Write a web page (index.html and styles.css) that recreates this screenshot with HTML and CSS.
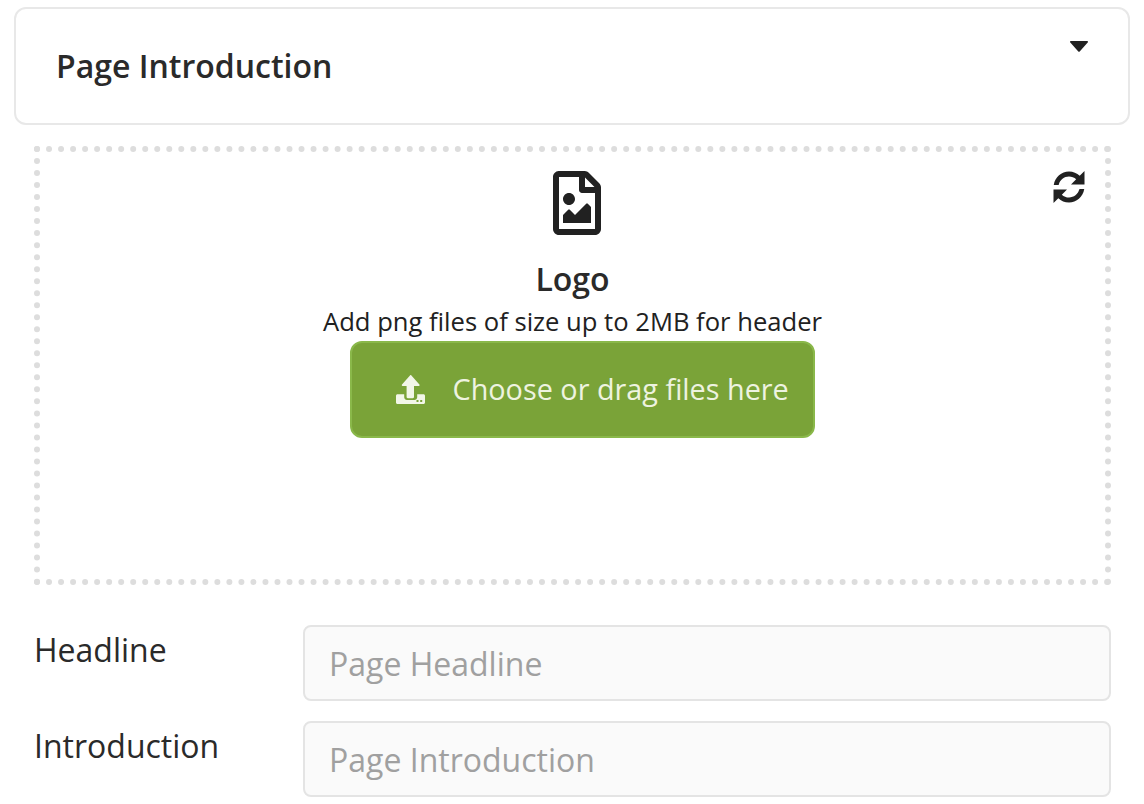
FILE: index.html
```html
<!DOCTYPE html>
<html lang="en">
<head>
<meta charset="utf-8">
<title>Page Introduction</title>
<link rel="stylesheet" href="styles.css">
</head>
<body>
<main class="page">
  <section class="panel">
    <h2 class="panel-title">Page Introduction</h2>
    <svg class="caret" viewBox="0 0 18 11" aria-hidden="true"><path d="M1 0h16c.9 0 1.3 1 .7 1.6L9.7 10.4c-.4.4-1 .4-1.4 0L.3 1.6C-.3 1 .1 0 1 0z"/></svg>
  </section>
  <section class="dropzone">
    <svg class="sync" viewBox="0 0 512 512" aria-hidden="true"><path d="M370.700 133.300C339.500 104 298.900 88 255.800 88 178.400 88.100 111.500 141.200 93.100 214.800 91.700 220.200 87 224 81.400 224H12C33.900 94.900 134.800 8 256 8c66.400 0 126.800 26.100 171.300 68.700L504 0V216H288z"/><path d="M141.300 378.700C172.500 408 213.100 424 256.200 424 333.600 423.900 400.500 370.800 418.900 297.200 420.300 291.800 425 288 430.600 288H500C478.100 417.100 377.200 504 256 504c-66.400 0-126.800-26.100-171.300-68.700L8 512V296H224z"/></svg>
    <svg class="file-icon" viewBox="0 0 384 512" aria-hidden="true"><path d="M369.9 97.9L286 14C277 5 264.8-.1 252.1-.1H48C21.5 0 0 21.5 0 48v416c0 26.5 21.5 48 48 48h288c26.5 0 48-21.5 48-48V131.9c0-12.7-5.1-25-14.1-34zM332.1 128H256V51.9l76.1 76.1zM48 464V48h160v104c0 13.3 10.7 24 24 24h104v288H48zm32-48h224V288l-23.5-23.5c-4.7-4.7-12.3-4.7-17 0L176 352l-39.5-39.5c-4.7-4.7-12.3-4.7-17 0L80 352v64zm48-240c-26.5 0-48 21.5-48 48s21.5 48 48 48 48-21.5 48-48-21.5-48-48-48z"/></svg>
    <h3 class="drop-title">Logo</h3>
    <p class="drop-hint">Add png files of size up to 2MB for header</p>
    <button class="upload" type="button">
      <svg class="upload-icon" viewBox="0 0 29 29" aria-hidden="true"><path d="M14.200.3c.3-.4.7-.4 1 0l8.200 9.300c.5.6.1 1.400-.6 1.400H18v11c0 .7-.5 1.200-1.200 1.200h-5c-.7 0-1.200-.5-1.200-1.200V11H6.600c-.7 0-1.100-.8-.6-1.400z"/><path fill-rule="evenodd" d="M1.500 19.300H8.200v3c0 1.500 1.300 2.700 2.800 2.700h7.400c1.500 0 2.800-1.200 2.800-2.700v-3h6.300c.8 0 1.500.7 1.500 1.500v6.700c0 .8-.7 1.500-1.500 1.500H1.500C.7 29 0 28.300 0 27.500v-6.700c0-.8.7-1.500 1.500-1.500zM20.500 25h2v2h-2zm3.700 0h2v2h-2z"/></svg>
      <span>Choose or drag files here</span>
    </button>
  </section>
  <form class="fields">
    <label class="field">
      <span class="field-label">Headline</span>
      <input class="field-input" type="text" placeholder="Page Headline">
    </label>
    <label class="field">
      <span class="field-label">Introduction</span>
      <input class="field-input" type="text" placeholder="Page Introduction">
    </label>
  </form>
</main>
</body>
</html>
```
FILE: styles.css
```css
* { box-sizing: border-box; }
html, body { margin: 0; height: 100%; background: #fff; overflow: hidden; }
body { font-family: "Open Sans", sans-serif; color: #212121; }
.page { padding: 7px 14px 0; }
.panel {
  height: 118px;
  border: 2px solid #e8e8e8;
  border-radius: 12px;
  padding: 0 40px;
  display: flex;
  align-items: center;
  position: relative;
}
.panel-title { margin: 0; font-size: 32px; font-weight: 600; line-height: 44px; color: #2a2a2a; }
.caret { position: absolute; top: 32px; right: 40px; width: 18px; height: 11px; fill: #212121; }
.dropzone {
  margin: 21px 19px 0 20px;
  height: 439px;
  border: 6px dotted #ddd;
  display: flex;
  flex-direction: column;
  align-items: center;
  padding-top: 19px;
  position: relative;
}
.sync { position: absolute; top: 19px; right: 20px; width: 32px; height: 32px; fill: #212121; }
.file-icon { width: 48px; height: 64px; fill: #212121; margin-left: 8px; }
.drop-title { margin: 22px 0 0; font-size: 32px; font-weight: 600; line-height: 44px; color: #2a2a2a; }
.drop-hint { margin: 1px 0 -1px; font-size: 25.6px; line-height: 40px; }
.upload {
  width: 465px;
  height: 97px;
  margin-left: 19px;
  background: #7aa338;
  border: 2px solid #8ab84a;
  border-radius: 12px;
  color: #eef3e0;
  font: 400 28.8px "Open Sans", sans-serif;
  display: flex;
  align-items: center;
  gap: 28px;
  padding: 0 0 2px 44px;
}
.upload-icon { width: 29px; height: 29px; fill: #f2f6e8; flex: none; margin-top: 2px; }
.fields { margin: 40px 19px 0 20px; display: flex; flex-direction: column; gap: 20px; }
.field { display: grid; grid-template-columns: 269px 1fr; }
.field-label { font-size: 32px; line-height: 50px; color: #2a2a2a; }
.field-input {
  width: 100%;
  height: 76px;
  border: 2px solid #e4e4e4;
  border-radius: 8px;
  background: #fafafa;
  padding: 0 24px;
  font: 400 32px "Open Sans", sans-serif;
  color: #212121;
}
.field-input::placeholder { color: #a0a0a0; opacity: 1; }
```
